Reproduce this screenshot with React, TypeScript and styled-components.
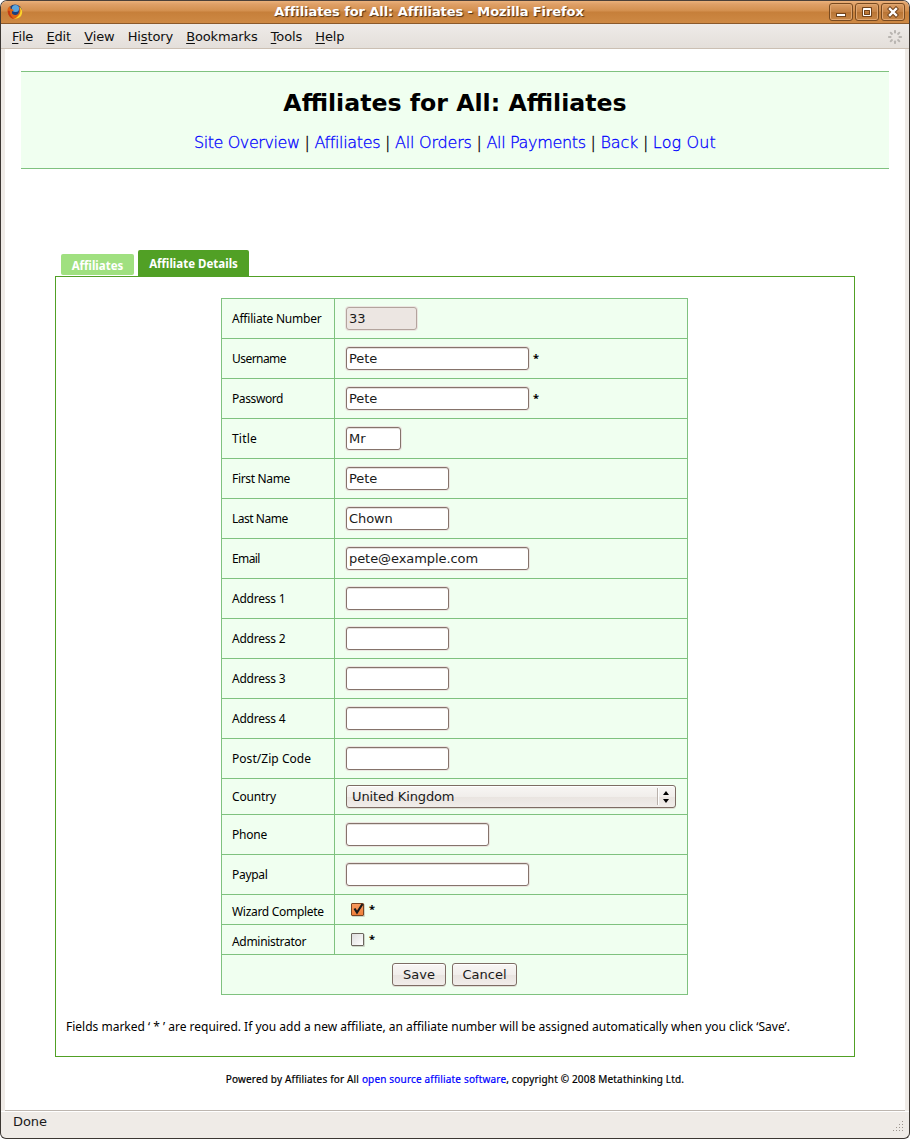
import React from 'react';
import styled, { createGlobalStyle, css } from 'styled-components';

const ui = '"DejaVu Sans", Verdana, sans-serif';
const humanist = '"Noto Sans", "Open Sans", sans-serif';

const GlobalStyle = createGlobalStyle`
  *, *::before, *::after { box-sizing: border-box; }
  html, body { margin: 0; background: #fff; }
  body { font: 13px/15px ${ui}; color: #000; }
`;

const Window = styled.div`
  width: 910px;
  height: 1139px;
  display: flex;
  flex-direction: column;
  overflow: hidden;
  border: 1px solid #3c3733;
  border-top-color: #4b4039;
  border-radius: 7px 7px 6px 6px;
  background: #efebe7;
`;

const TitleBar = styled.header`
  flex: none;
  height: 23px;
  display: flex;
  align-items: center;
  padding: 0 4px 0 6px;
  background: linear-gradient(#ebb27c 0, #dfa067 3px, #d38f4e 10px, #c67f3a 11px, #ce8944 22px);
  border-bottom: 1px solid #8b592b;
`;

const WindowTitle = styled.h1`
  flex: 1;
  margin: 0;
  padding-left: 6px;
  text-align: center;
  font: bold 13px/16px ${ui};
  letter-spacing: -0.08px;
  color: #fff;
  text-shadow: 1px 1px 1px #4d2f14;
`;

const WindowButtons = styled.div`
  display: flex;
  gap: 2px;
`;

const WindowButton = styled.span`
  width: 24px;
  height: 18px;
  display: grid;
  place-items: center;
  border: 1px solid #784a20;
  border-radius: 3px;
  background: linear-gradient(#dda067, #c58245 48%, #b97535 52%, #c88747);
  box-shadow: inset 0 0 0 1px #e0a670;
  svg { display: block; }
`;

const MenuBar = styled.nav`
  flex: none;
  height: 25px;
  display: flex;
  align-items: center;
  padding: 0 7px 0 11px;
  background: linear-gradient(#eeebe8, #e4dfda);
  border-bottom: 1px solid #cbbfb3;
`;

const MenuItem = styled.span`
  margin-right: 13.2px;
  line-height: 17px;
  letter-spacing: -0.14px;
  color: #101010;
  u { text-underline-offset: 2px; text-decoration-thickness: 1px; }
`;

const Throbber = styled.svg`
  display: block;
  margin: 1px 0 0 auto;
`;

const Viewport = styled.main`
  flex: none;
  height: 1062px;
  margin: 0 4px;
  padding: 22px 16px 0;
  background: #fff;
  border-bottom: 1px solid #bdb6b0;
`;

const Banner = styled.section`
  height: 98px;
  background: #f0fff0;
  border: solid #7fc27f;
  border-width: 1px 0;
  text-align: center;
`;

const PageTitle = styled.h2`
  margin: 0;
  padding-top: 16px;
  font: bold 23.65px/30px ${ui};
`;

const SiteLinks = styled.p`
  margin: 15px 0 0;
  font: 200 16px/20px "DejaVu Sans Light", "DejaVu Sans", sans-serif;
  letter-spacing: -0.27px;
  -webkit-text-stroke: 0.3px;
`;

const Link = styled.a<{ $track?: number }>`
  color: #00f;
  text-decoration: none;
  ${p => p.$track !== undefined && css`letter-spacing: ${p.$track}px;`}
`;

const Tabs = styled.div`
  display: flex;
  align-items: flex-end;
  gap: 4px;
  height: 26px;
  margin: 81px 34px 0;
  padding-left: 6px;
`;

const Tab = styled.span<{ $active?: boolean }>`
  border-radius: 2px 2px 0 0;
  text-align: center;
  color: #fff;
  font: bold 11.5px/24px ${humanist};
  ${p => p.$active
    ? css`width: 111px; height: 26px; line-height: 27px; background: #51a025;`
    : css`width: 73px; height: 21px; margin-bottom: 1px; line-height: 23px; background: #a0e080; border-radius: 2px;`}
`;

const Panel = styled.section`
  height: 781px;
  margin: 0 34px;
  padding: 21px 10px 0;
  border: 1px solid #51a025;
`;

const Grid = styled.div`
  width: 467px;
  margin: 0 auto 0 155px;
  border: 1px solid #7fc27f;
  border-bottom: 0;
  background: #f0fff0;
`;

const Row = styled.div<{ $h?: number }>`
  display: flex;
  height: ${p => p.$h ?? 40}px;
  border-bottom: 1px solid #7fc27f;
`;

const Label = styled.label<{ $low?: boolean; $track?: number }>`
  width: 113px;
  padding: ${p => (p.$low ? 4 : 1)}px 0 0 10px;
  display: flex;
  align-items: center;
  border-right: 1px solid #7fc27f;
  font: 12px/16px ${humanist};
  letter-spacing: ${p => p.$track ?? 0}px;
  white-space: nowrap;
`;

const Value = styled.div`
  flex: 1;
  display: flex;
  align-items: center;
  padding-left: 11px;
`;

const Input = styled.input<{ $w: number }>`
  width: ${p => p.$w}px;
  height: 23px;
  margin: 0;
  padding: 0 2px;
  border: 1px solid #85736b;
  border-radius: 3px;
  outline: 0;
  background: #fff;
  box-shadow: 0 0 0 1px #ebe6e1, inset 0 1px 0 #e4dfdc;
  font: 13px/17px ${ui};
  letter-spacing: -0.07px;
  color: #1a1a1a;
  &:disabled { background: #ece6e2; border-color: #b3a49d; box-shadow: 0 0 0 1px #ebe6e1; }
`;

const Star = styled.span`
  margin: -2px 0 0 4px;
  font: bold 11px/16px ${humanist};
`;

const raised = css`
  border: 1px solid #7d6c63;
  border-radius: 3px;
  background: linear-gradient(#f8f6f4, #f1eeeb 50%, #e9e4e0 52%, #f1edea);
  box-shadow: inset 0 1px 0 #fff, 0 1px 0 #dfdfd6;
  font: 13px/17px ${ui};
  color: #1a1a1a;
`;

const Picker = styled.div`
  ${raised}
  width: 330px;
  height: 23px;
  display: flex;
  align-items: center;
  padding: 0 3px 0 5px;
  letter-spacing: -0.14px;
  svg { display: block; margin-left: auto; }
`;

const Check = styled.span<{ $on?: boolean }>`
  width: 13px;
  height: 13px;
  margin: 0 1px 0 5px;
  border: 1px solid ${p => (p.$on ? '#7a4422' : '#6c665f')};
  border-radius: 1px;
  background: ${p => (p.$on ? 'linear-gradient(#f79a5e, #f07f3a)' : 'linear-gradient(135deg, #dedede, #fff)')};
  box-shadow: 1px 1px 0 #cdd6c8;
  svg { display: block; overflow: visible; }
`;

const Actions = styled(Row)`
  align-items: center;
  justify-content: center;
  gap: 6px;
`;

const Button = styled.button<{ $w: number }>`
  ${raised}
  width: ${p => p.$w}px;
  height: 23px;
  margin: 0;
  padding: 0;
`;

const Note = styled.p`
  margin: 24px 0 0;
  font: 12px/16px ${humanist};
  white-space: nowrap;
`;

const Footer = styled.p`
  margin: 15px 0 0;
  text-align: center;
  font: 10px/14px ${humanist};
  letter-spacing: 0.17px;
  -webkit-text-stroke: 0.2px;
`;

const StatusBar = styled.footer`
  flex: 1;
  display: flex;
  justify-content: space-between;
  padding: 2px 4px 0 12px;
  border-top: 1px solid #fff;
  line-height: 15px;
  letter-spacing: -0.1px;
  color: #1a1a1a;
`;

const Grip = styled.svg`
  display: block;
  margin-top: 7px;
`;

type Field = { label: string; track: number; w: number; value?: string; required?: boolean; disabled?: boolean };

const before: Field[] = [
  { label: 'Affiliate Number', track: -0.22, w: 71, value: '33', disabled: true },
  { label: 'Username', track: -0.55, w: 183, value: 'Pete', required: true },
  { label: 'Password', track: -0.4, w: 183, value: 'Pete', required: true },
  { label: 'Title', track: 0.2, w: 55, value: 'Mr' },
  { label: 'First Name', track: -0.33, w: 103, value: 'Pete' },
  { label: 'Last Name', track: -0.48, w: 103, value: 'Chown' },
  { label: 'Email', track: -0.6, w: 183, value: 'pete@example.com' },
  { label: 'Address 1', track: -0.22, w: 103 },
  { label: 'Address 2', track: -0.22, w: 103 },
  { label: 'Address 3', track: -0.22, w: 103 },
  { label: 'Address 4', track: -0.22, w: 103 },
  { label: 'Post/Zip Code', track: 0.04, w: 103 },
];

const after: Field[] = [
  { label: 'Phone', track: -0.2, w: 143 },
  { label: 'Paypal', track: -0.3, w: 183 },
];

function FieldRow({ label, track, w, value = '', required, disabled }: Field) {
  return (
    <Row>
      <Label $track={track}>{label}</Label>
      <Value>
        <Input $w={w} defaultValue={value} disabled={disabled} />
        {required && <Star>*</Star>}
      </Value>
    </Row>
  );
}

const menus = [['', 'F', 'ile'], ['', 'E', 'dit'], ['', 'V', 'iew'], ['Hi', 's', 'tory'], ['', 'B', 'ookmarks'], ['', 'T', 'ools'], ['', 'H', 'elp']];

const links: [string, number][] = [
  ['Site Overview', -0.42],
  ['Affiliates', -0.35],
  ['All Orders', -0.2],
  ['All Payments', -0.33],
  ['Back', -0.2],
  ['Log Out', 0.15],
];

function FirefoxLogo() {
  return (
    <svg width="16" height="16" viewBox="0 0 16 16">
      <circle cx="8" cy="7.5" r="7" fill="#1c3f7c" />
      <circle cx="8.5" cy="4.500" r="3.600" fill="#5aa4dc" />
      <path d="M.6 5C1.500 3 2.500 2.500 3.600 2.600L3.500 4.600 5.500 5.200 6.800 6.300 5 7.500 5 9.300C6.200 11.500 9.500 11.400 11.300 9.400 12.600 7.600 12.600 5 11.800 2.300 14.500 4 15.800 7 14.800 10.300 13.400 14 10 15.600 6.800 15 2.400 14 .2 10 .6 5Z" fill="#dd6514" />
      <path d="M12.800 3C15.200 5 15.900 8 14.600 11 13 14 9.500 15.400 7 14.600 10.600 13.600 13.600 10 13.400 6.400Z" fill="#fbd52c" />
      <path d="M.8 6.500C.6 10.500 3 14 6.600 14.800 4.200 12.500 2.800 10 2.800 7Z" fill="#c43a12" />
    </svg>
  );
}

export default function App() {
  return (
    <>
      <GlobalStyle />
      <Window>
        <TitleBar>
          <FirefoxLogo />
          <WindowTitle>Affiliates for All: Affiliates - Mozilla Firefox</WindowTitle>
          <WindowButtons>
            <WindowButton>
              <svg width="12" height="12"><rect x="1.5" y="7.500" width="9" height="3" fill="#fff" stroke="#70431c" /></svg>
            </WindowButton>
            <WindowButton>
              <svg width="12" height="12"><path d="M1.500 1.500h9v9h-9z" fill="none" stroke="#70431c" /><path d="M2.500 2.500h7v7h-7z" fill="none" stroke="#fff" /><path d="M3 3.500h6" stroke="#fff" /><path d="M3.500 4.500h5v4h-5z" fill="none" stroke="#70431c" /></svg>
            </WindowButton>
            <WindowButton>
              <svg width="12" height="12"><path d="M3 3l6 6M9 3l-6 6" stroke="#70431c" strokeWidth="4.400" strokeLinecap="square" /><path d="M3 3l6 6M9 3l-6 6" stroke="#fff" strokeWidth="2.400" strokeLinecap="square" /></svg>
            </WindowButton>
          </WindowButtons>
        </TitleBar>
        <MenuBar>
          {menus.map(([a, key, b]) => <MenuItem key={key + b}>{a}<u>{key}</u>{b}</MenuItem>)}
          <Throbber width="14" height="14" viewBox="0 0 14 14">
            {[0, 45, 90, 135, 180, 225, 270, 315].map(r => (
              <rect key={r} x="6" y="0" width="2" height="3.500" rx=".8" fill="#b9b5b1" transform={`rotate(${r} 7 7)`} />
            ))}
          </Throbber>
        </MenuBar>
        <Viewport>
          <Banner>
            <PageTitle>Affiliates for All: Affiliates</PageTitle>
            <SiteLinks>
              {links.map(([text, track], i) => (
                <React.Fragment key={text}>{i > 0 && ' | '}<Link $track={track}>{text}</Link></React.Fragment>
              ))}
            </SiteLinks>
          </Banner>
          <Tabs>
            <Tab>Affiliates</Tab>
            <Tab $active>Affiliate Details</Tab>
          </Tabs>
          <Panel>
            <Grid>
              {before.map(f => <FieldRow key={f.label} {...f} />)}
              <Row $h={36}>
                <Label $track={-0.14}>Country</Label>
                <Value>
                  <Picker>
                    United Kingdom
                    <svg width="17" height="19"><path d="M2.500 1v17" stroke="#b9b1ab" /><path d="M3.500 1v17" stroke="#fff" /><path d="M8 8l3-4 3 4zM8 12l3 4 3-4z" fill="#000" /></svg>
                  </Picker>
                </Value>
              </Row>
              {after.map(f => <FieldRow key={f.label} {...f} />)}
              <Row $h={30}>
                <Label $low $track={-0.3}>Wizard Complete</Label>
                <Value>
                  <Check $on>
                    <svg width="11" height="11"><path d="M2.500 4.500L5 8.500 10.500 0" fill="none" stroke="#1a1a1a" strokeWidth="2.200" /></svg>
                  </Check>
                  <Star>*</Star>
                </Value>
              </Row>
              <Row $h={30}>
                <Label $low $track={-0.3}>Administrator</Label>
                <Value><Check /><Star>*</Star></Value>
              </Row>
              <Actions>
                <Button $w={54}>Save</Button>
                <Button $w={65}>Cancel</Button>
              </Actions>
            </Grid>
            <Note>Fields marked ‘ * ’ are required. If you add a new affiliate, an affiliate number will be assigned automatically when you click ‘Save’.</Note>
          </Panel>
          <Footer>Powered by Affiliates for All <Link>open source affiliate software</Link>, copyright © 2008 Metathinking Ltd.</Footer>
        </Viewport>
        <StatusBar>
          Done
          <Grip width="12" height="12">
            {[[9, 0], [6, 3], [9, 3], [3, 6], [6, 6], [9, 6], [0, 9], [3, 9], [6, 9], [9, 9]].map(([x, y]) => (
              <rect key={`${x}-${y}`} x={x} y={y} width="1" height="1" fill="#9d958f" />
            ))}
          </Grip>
        </StatusBar>
      </Window>
    </>
  );
}
